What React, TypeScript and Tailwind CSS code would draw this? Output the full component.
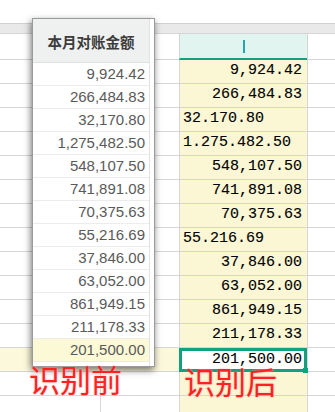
import React from 'react';

const rows = [
  { before: '9,924.42', after: '9,924.42', left: false },
  { before: '266,484.83', after: '266,484.83', left: false },
  { before: '32,170.80', after: '32.170.80', left: true },
  { before: '1,275,482.50', after: '1.275.482.50', left: true },
  { before: '548,107.50', after: '548,107.50', left: false },
  { before: '741,891.08', after: '741,891.08', left: false },
  { before: '70,375.63', after: '70,375.63', left: false },
  { before: '55,216.69', after: '55.216.69', left: true },
  { before: '37,846.00', after: '37,846.00', left: false },
  { before: '63,052.00', after: '63,052.00', left: false },
  { before: '861,949.15', after: '861,949.15', left: false },
  { before: '211,178.33', after: '211,178.33', left: false },
  { before: '201,500.00', after: '201,500.00', left: false },
];

export default function App() {
  const last = rows.length - 1;

  return (
    <div className="relative w-[335px] h-[412px] overflow-hidden bg-white">
      {/* column header strip */}
      <div className="h-[23px]" />
      <div className="h-[10px] bg-[#e9e9e9] border-t border-[#d0d0d0]" />

      {/* sheet header row */}
      <div className="flex h-[27px] border-t border-[#d6d6d6]">
        <div className="w-[179px] border-b border-[#d4d4d4]" />
        <div className="w-[128px] bg-[#e2f4ef] border-l border-[#d4d4d4] border-b-2 border-b-[#12a27b] flex items-center justify-center">
          <span className="block w-[2px] h-[13px] bg-[#21a9b0]" />
        </div>
        <div className="flex-1 border-l border-b border-[#d4d4d4]" />
      </div>

      {/* sheet body */}
      {rows.map((r, i) => {
        const selected = i === last;
        return (
          <div key={i} className="flex h-[24px]">
            <div className={`w-[100px] border-b border-[#d6d6d6] ${selected ? 'bg-[#fbf8dc]' : ''}`} />
            <div className={`w-[79px] border-l border-b border-[#d6d6d6] ${selected ? 'bg-[#fbf8dc]' : ''}`} />
            {selected ? (
              <div className="relative w-[128px] bg-white border-[3px] border-[#13a07c] flex items-center justify-end pr-[2px] font-['Liberation_Mono',monospace] text-[15px] text-black [-webkit-text-stroke:0.12px_black]">
                {r.after}
                <span className="absolute right-[-4px] bottom-[-4px] w-[5px] h-[5px] bg-[#13a07c]" />
              </div>
            ) : (
              <div
                className={`w-[128px] bg-[#fbf6d3] border-l border-b border-[#d6d6d6] flex items-center font-['Liberation_Mono',monospace] text-[15px] text-black [-webkit-text-stroke:0.12px_black] ${
                  r.left ? 'justify-start pl-[3px]' : 'justify-end pr-[5px]'
                }`}
              >
                {r.after}
              </div>
            )}
            <div className="flex-1 border-l border-b border-[#d6d6d6]" />
          </div>
        );
      })}
      {[0, 1].map((k) => (
        <div key={k} className="flex h-[24px]">
          <div className="w-[100px] border-b border-[#d6d6d6]" />
          <div className="w-[79px] border-l border-b border-[#d6d6d6]" />
          <div className="w-[128px] bg-[#fbf6d3] border-l border-b border-[#d6d6d6]" />
          <div className="flex-1 border-l border-b border-[#d6d6d6]" />
        </div>
      ))}

      {/* filter popup, before recognition */}
      <div className="absolute left-[32px] top-[18px] w-[123px] h-[349px] bg-white border border-[#9a9a9a] shadow-[-1px_3px_7px_rgba(0,0,0,0.55)] flex">
        <div className="w-[117px] border-r border-[#e2e2e2] flex flex-col">
          <div className="h-[44px] bg-[#eff0f0] border-b border-[#e0e0e0] flex items-center justify-center pt-[2px] font-['Noto_Sans_CJK_SC',sans-serif] font-bold text-[14.5px] text-[#3c3c3c]">
            本月对账金额
          </div>
          {rows.map((r, i) => (
            <div
              key={i}
              className={`h-[23px] border-b border-[#ececec] flex items-center justify-end pr-[4px] font-['Liberation_Sans',sans-serif] text-[15px] text-[#5a5a5a] ${
                i === last ? 'bg-[#fbf9d6]' : ''
              }`}
            >
              {r.before}
            </div>
          ))}
        </div>
      </div>

      {/* labels */}
      <div className="absolute left-[29px] top-[363px] font-['Noto_Sans_CJK_SC',sans-serif] text-[31px] leading-none text-[#ff2222] [text-shadow:0_0_2px_rgba(255,160,160,0.9)]">
        识别前
      </div>
      <div className="absolute left-[184px] top-[365px] font-['Noto_Sans_CJK_SC',sans-serif] text-[31px] leading-none text-[#ff2222] [text-shadow:0_0_2px_rgba(255,160,160,0.9)]">
        识别后
      </div>
    </div>
  );
}
